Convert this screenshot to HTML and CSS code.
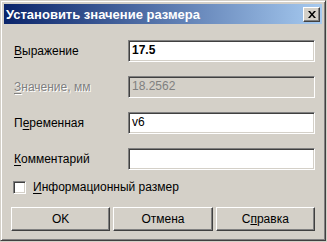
FILE: index.html
```html
<!DOCTYPE html>
<html>
	<head>
		<meta charset="utf-8" />
		<title>Установить значение размера</title>
		<link rel="stylesheet" href="styles.css">
	</head>
	<body>
		<div class="window">
			<div class="titlebar">
				<div class="title">Установить значение размера</div>
				<div class="close">
					<svg width="8" height="7" viewBox="0 0 8 7"><path d="M0 0h2l2 2.5 2-2.5h2l-3 3.5 3 3.5h-2l-2-2.5-2 2.5h-2l3-3.5z" fill="#000"/></svg>
				</div>
			</div>
			<div class="content">
				<div class="form">
					<div class="label"><u>В</u>ыражение</div>
					<div class="edit bold">17.5</div>
					<div class="label disabled"><u>З</u>начение, мм</div>
					<div class="edit off">18.2562</div>
					<div class="label">П<u>е</u>ременная</div>
					<div class="edit">v6</div>
					<div class="label"><u>К</u>омментарий</div>
					<div class="edit"></div>
				</div>
				<div class="check">
					<div class="box"></div>
					<div class="label"><u>И</u>нформационный размер</div>
				</div>
				<div class="buttons">
					<div class="btn">OK</div>
					<div class="btn">Отмена</div>
					<div class="btn">С<u>п</u>равка</div>
				</div>
			</div>
		</div>
	</body>
</html>
```

FILE: styles.css
```css
*{
	margin: 0;
	padding: 0;
	box-sizing: border-box;
}
body{
	background: #d4d0c8;
	font-family: "Liberation Sans", Arial, sans-serif;
	font-size: 12px;
	color: #000;
}
.window{
	width: 326px;
	height: 241px;
	padding: 3px;
	background: #d4d0c8;
	border: 1px solid;
	border-color: #d4d0c8 #404040 #404040 #d4d0c8;
	box-shadow: inset 1px 1px #fff, inset -1px -1px #808080;
}
.titlebar{
	height: 20px;
	display: flex;
	align-items: center;
	justify-content: space-between;
	padding: 0 2px;
	background: linear-gradient(to right, #0a246a, #a6caf0);
}
.title{
	color: #fff;
	font-weight: bold;
	font-size: 13px;
}
.close{
	width: 17px;
	height: 15px;
	display: flex;
	align-items: center;
	justify-content: center;
	background: #d4d0c8;
	border: 1px solid;
	border-color: #fff #404040 #404040 #fff;
	box-shadow: inset -1px -1px #808080;
}
.content{
	padding: 16px 7px 0 10px;
}
.form{
	display: grid;
	grid-template-columns: 114px 187px;
	grid-auto-rows: 22px;
	row-gap: 14px;
	align-items: center;
}
.label u{
	text-decoration-thickness: 1px;
	text-underline-offset: 2px;
}
.disabled{
	color: #808080;
	text-shadow: 1px 1px #fff;
}
.edit{
	height: 22px;
	padding: 0 3px;
	line-height: 18px;
	background: #fff;
	border: 1px solid;
	border-color: #808080 #fff #fff #808080;
	box-shadow: inset 1px 1px #404040, inset -1px -1px #d4d0c8;
}
.bold{
	font-weight: bold;
}
.off{
	background: #d4d0c8;
	color: #808080;
}
.check{
	display: flex;
	align-items: center;
	gap: 7px;
	margin-top: 10px;
	margin-left: -1px;
}
.box{
	width: 13px;
	height: 13px;
	background: #fff;
	border: 1px solid;
	border-color: #808080 #fff #fff #808080;
	box-shadow: inset 1px 1px #404040, inset -1px -1px #d4d0c8;
}
.buttons{
	display: flex;
	gap: 3px;
	margin-top: 13px;
	margin-left: -3px;
}
.btn{
	width: 100px;
	height: 24px;
	line-height: 22px;
	text-align: center;
	border: 1px solid;
	border-color: #fff #404040 #404040 #fff;
	box-shadow: inset -1px -1px #808080;
}
```
